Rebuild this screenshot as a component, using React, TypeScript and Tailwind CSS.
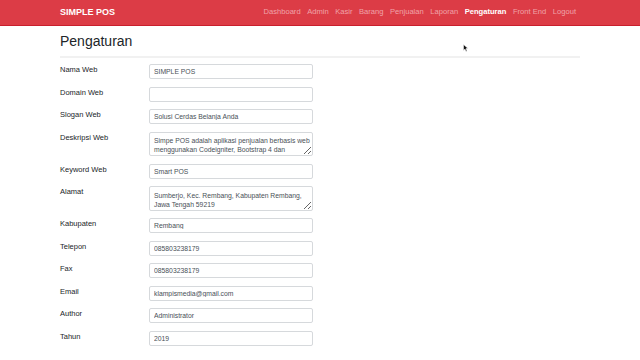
import React from "react";

const navItems = [
  "Dashboard",
  "Admin",
  "Kasir",
  "Barang",
  "Penjualan",
  "Laporan",
  "Pengaturan",
  "Front End",
  "Logout",
];

type Field = { label: string; value: string; area?: boolean };

const fields: Field[] = [
  { label: "Nama Web", value: "SIMPLE POS" },
  { label: "Domain Web", value: "" },
  { label: "Slogan Web", value: "Solusi Cerdas Belanja Anda" },
  {
    label: "Deskripsi Web",
    value:
      "Simpe POS adalah aplikasi penjualan berbasis web\nmenggunakan Codeigniter, Bootstrap 4 dan\nJquery",
    area: true,
  },
  { label: "Keyword Web", value: "Smart POS" },
  {
    label: "Alamat",
    value: "Sumberjo, Kec. Rembang, Kabupaten Rembang,\nJawa Tengah 59219",
    area: true,
  },
  { label: "Kabupaten", value: "Rembang" },
  { label: "Telepon", value: "085803238179" },
  { label: "Fax", value: "085803238179" },
  { label: "Email", value: "klampismedia@gmail.com" },
  { label: "Author", value: "Administrator" },
  { label: "Tahun", value: "2019" },
];

export default function App() {
  return (
    <div
      className="relative w-[640px] h-[360px] overflow-hidden bg-white text-[#212529]"
      style={{ fontFamily: '"Liberation Sans", Arial, sans-serif' }}
    >
      <nav className="h-[25.5px] bg-[#dc3c46] border-b-[1.5px] border-[#c91f2d] flex items-center justify-between pl-[60px] pr-[64px]">
        <span className="text-white font-bold text-[9px] leading-none">SIMPLE POS</span>
        <ul className="flex gap-[6.5px] text-[7.6px] leading-none">
          {navItems.map((n) => (
            <li
              key={n}
              className={n === "Pengaturan" ? "text-white font-semibold" : "text-[#f0a3a9]"}
            >
              {n}
            </li>
          ))}
        </ul>
      </nav>

      <div className="w-[520px] ml-[60px]">
        <h3 className="text-[14px] leading-none pt-[8.5px] pb-[8px] text-[#212529]">Pengaturan</h3>
        <div className="h-[2px] bg-[#f1f1f1]" />
        <form className="pt-[6px] flex flex-col gap-[7.5px]">
          {fields.map((f) => (
            <div key={f.label} className="flex items-start">
              <label className="w-[89px] text-[7.5px] leading-[12px] text-[#212529]">{f.label}</label>
              {f.area ? (
                <textarea
                  readOnly
                  value={f.value}
                  className="w-[164px] h-[24.5px] border border-[#d6d9dc] rounded-[2px] pl-[4px] pr-[2px] pt-[3.5px] text-[6.8px] leading-[9px] text-[#495057] overflow-hidden resize-y outline-none"
                  style={{ fontFamily: '"Liberation Sans", Arial, sans-serif' }}
                />
              ) : (
                <input
                  readOnly
                  value={f.value}
                  className="w-[164px] h-[15px] border border-[#d6d9dc] rounded-[2px] px-[4px] text-[6.8px] text-[#495057] outline-none"
                  style={{ fontFamily: '"Liberation Sans", Arial, sans-serif' }}
                />
              )}
            </div>
          ))}
        </form>
      </div>

      <svg
        className="absolute left-[463px] top-[44px]"
        width="5"
        height="8"
        viewBox="0 0 10 16"
      >
        <path d="M1 1 L1 13 L4 10 L6 15 L8 14 L6 9 L10 9 Z" fill="#111" stroke="#fff" strokeWidth="1" />
      </svg>
    </div>
  );
}
